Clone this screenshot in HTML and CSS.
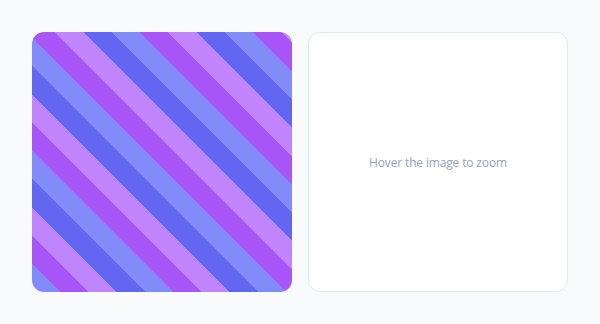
FILE: index.html
```html
<!DOCTYPE html>
<html>
<head>
<meta charset="utf-8">
<link rel="stylesheet" href="styles.css">
</head>
<body>
<div class="zoom-demo">
  <div class="source"></div>
  <div class="preview">
    <span class="hint">Hover the image to zoom</span>
  </div>
</div>
</body>
</html>
```
FILE: styles.css
```css
html, body {
  margin: 0;
  padding: 0;
  background: #f8fafc;
  font-family: "Open Sans", "Noto Sans", sans-serif;
}
.zoom-demo {
  display: grid;
  grid-template-columns: 260px 260px;
  gap: 16px;
  padding: 32px;
}
.source {
  height: 260px;
  border-radius: 12px;
  background: repeating-linear-gradient(45deg,
    #818cf8 0 20px,
    #a855f7 20px 40px,
    #c084fc 40px 60px,
    #6366f1 60px 80px);
}
.preview {
  height: 258px;
  background: #ffffff;
  border: 1px solid #e2e8f0;
  border-radius: 12px;
  display: flex;
  align-items: center;
  justify-content: center;
}
.hint {
  font-size: 12px;
  letter-spacing: -0.15px;
  color: #94a3b8;
}
```
